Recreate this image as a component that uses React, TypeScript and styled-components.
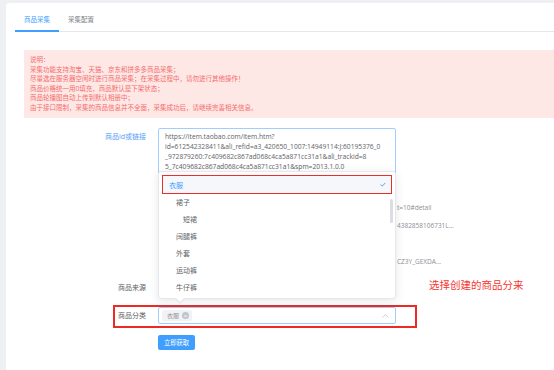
import React from 'react'
import styled, { createGlobalStyle } from 'styled-components'

const GlobalStyle = createGlobalStyle`
    html, body {
        margin: 0;
        padding: 0;
    }
    body {
        width: 554px;
        height: 370px;
        overflow: hidden;
        background: #eef0f3;
        font-family: "Open Sans", "Noto Sans CJK SC", sans-serif;
    }
`;

const Page = styled.div`
    width: 800px;
    padding: 3px 0 0 6px;
`;

const Card = styled.div`
    background: #fff;
    border-radius: 4px 0 0 0;
    padding: 7px 9px 0;
    min-height: 420px;
`;

const Tabs = styled.div`
    display: flex;
    border-bottom: 1px solid #e4e7ed;
`;

const Tab = styled.div<{ $active?: boolean }>`
    height: 20px;
    line-height: 20px;
    padding: 0 9px;
    margin-bottom: -1px;
    font-size: 6.5px;
    color: ${p => (p.$active ? '#409eff' : '#7a7d84')};
    border-bottom: 2px solid ${p => (p.$active ? '#409eff' : 'transparent')};
`;

const Content = styled.div`
    padding: 0 9px;
`;

const Alert = styled.div`
    margin-top: 18px;
    padding: 5px 6px 6px;
    background: #fde8e6;
    color: #f56c6c;
    font-size: 6.5px;
    line-height: 9.5px;
`;

const Form = styled.div`
    margin-top: 10px;
`;

const FormItem = styled.div`
    position: relative;
    display: flex;
    align-items: flex-start;
    margin-bottom: 11px;
`;

const Label = styled.div<{ $focus?: boolean }>`
    width: 122px;
    padding-right: 12px;
    text-align: right;
    font-size: 7px;
    line-height: 17px;
    color: ${p => (p.$focus ? '#5a9ef7' : '#606266')};
`;

const Field = styled.div`
    display: flex;
    flex-direction: column;
`;

const Textarea = styled.textarea`
    display: block;
    box-sizing: border-box;
    width: 238px;
    height: 52px;
    margin: 0;
    padding: 3px 6px;
    border: 1px solid #a0cfff;
    border-radius: 2px;
    font-family: inherit;
    font-size: 6.7px;
    line-height: 10px;
    color: #606266;
    resize: none;
    overflow: hidden;
    outline: none;
`;

/* example links under the textarea, mostly covered by the open dropdown */
const Hints = styled.div`
    margin: 19px 0 -3px 239px;
`;

const HintLine = styled.div`
    height: 18px;
    line-height: 18px;
    white-space: nowrap;
    font-size: 6.5px;
    color: #8c8f96;
`;

const SourceBox = styled.div`
    box-sizing: border-box;
    width: 238px;
    height: 17px;
    border: 1px solid #dcdfe6;
    border-radius: 2px;
`;

const SelectBox = styled.div`
    position: relative;
    box-sizing: border-box;
    display: flex;
    align-items: center;
    justify-content: space-between;
    width: 238px;
    height: 17px;
    padding: 0 6px 0 3px;
    border: 1px solid #a0cfff;
    border-radius: 2px;
    background: #fff;
`;

const Tag = styled.span`
    display: flex;
    align-items: center;
    gap: 3px;
    height: 11px;
    padding: 0 3px 0 5px;
    border-radius: 2px;
    background: #f0f2f5;
    color: #909399;
    font-size: 6px;
`;

const TagClose = styled.span`
    display: flex;
    align-items: center;
    justify-content: center;
    width: 7px;
    height: 7px;
    border-radius: 50%;
    background: #c0c4cc;
    color: #fff;
    font-size: 6px;
    line-height: 1;
`;

const Popup = styled.div`
    position: absolute;
    left: -1px;
    bottom: calc(100% + 9px);
    z-index: 10;
    box-sizing: border-box;
    width: 238px;
    height: 128px;
    padding: 4px 4px;
    background: #fff;
    border: 1px solid #e4e7ed;
    border-radius: 3px;
    box-shadow: 0 2px 10px rgba(0, 0, 0, 0.1);

    &::before,
    &::after {
        content: '';
        position: absolute;
        left: 16px;
        border: 5px solid transparent;
    }
    &::before {
        bottom: -11px;
        border-top-color: #e4e7ed;
    }
    &::after {
        bottom: -9px;
        border-top-color: #fff;
    }
`;

const Option = styled.div<{ $level: number; $selected?: boolean }>`
    display: flex;
    align-items: center;
    justify-content: space-between;
    height: 17px;
    padding: 0 5px 0 ${p => 6 + p.$level * 7}px;
    font-size: 7px;
    color: ${p => (p.$selected ? '#409eff' : '#606266')};
    background: ${p => (p.$selected ? '#f5f7fa' : 'transparent')};
    outline: ${p => (p.$selected ? '1.5px solid #e8302a' : 'none')};
`;

const Thumb = styled.div`
    position: absolute;
    right: 2px;
    top: 27px;
    width: 3px;
    height: 24px;
    border-radius: 2px;
    background: #dcdde0;
`;

const Marker = styled.div`
    position: absolute;
    left: 89px;
    top: -2px;
    box-sizing: border-box;
    width: 304px;
    height: 23px;
    border: 2px solid #ee2a24;
    pointer-events: none;
`;

const Note = styled.div`
    position: absolute;
    left: 405px;
    top: -29px;
    font-size: 10.5px;
    line-height: 14px;
    white-space: nowrap;
    color: #f5352f;
`;

const SubmitRow = styled.div`
    display: flex;
    padding-left: 134px;
`;

const Button = styled.button`
    width: 37px;
    height: 15px;
    padding: 0;
    border: none;
    border-radius: 2px;
    background: #409eff;
    color: #fff;
    font-family: inherit;
    font-size: 6.3px;
`;

const notes = [
    '说明：',
    '采集功能支持淘宝、天猫、京东和拼多多商品采集；',
    '尽量选在服务器空闲时进行商品采集；在采集过程中，请勿进行其他操作！',
    '商品价格统一用0填充，商品默认是下架状态；',
    '商品轮播图自动上传到默认相册中；',
    '由于接口限制，采集的商品信息并不全面，采集成功后，请继续完善相关信息。',
];

const url = [
    'https://item.taobao.com/item.htm?',
    'id=612542328411&ali_refid=a3_420650_1007:14949114:J:60195376_0',
    '_972879260:7c409682c867ad068c4ca5a871cc31a1&ali_trackid=8',
    '5_7c409682c867ad068c4ca5a871cc31a1&spm=2013.1.0.0',
].join('\n');

const hints = ['t=10#detail', '4382858106731L...', '', 'CZ3Y_GEXDA...'];

const options = [
    { name: '衣服', level: 0, selected: true },
    { name: '裙子', level: 1 },
    { name: '短裙', level: 2 },
    { name: '阔腿裤', level: 1 },
    { name: '外套', level: 1 },
    { name: '运动裤', level: 1 },
    { name: '牛仔裤', level: 1 },
];

const Check = () => (
    <svg width="6" height="5" viewBox="0 0 6 5">
        <polyline points="0.6,2.6 2.3,4.1 5.4,0.8" fill="none" stroke="#409eff" strokeWidth="0.9" />
    </svg>
);

const ChevronUp = () => (
    <svg width="7" height="4" viewBox="0 0 7 4">
        <polyline points="0.5,3.5 3.5,0.6 6.5,3.5" fill="none" stroke="#c0c4cc" strokeWidth="0.8" />
    </svg>
);

const App = () => {
    return (
        <Page>
            <GlobalStyle />
            <Card>
                <Tabs>
                    <Tab $active>商品采集</Tab>
                    <Tab>采集配置</Tab>
                </Tabs>

                <Content>
                    <Alert>
                        {notes.map(n => (
                            <div key={n}>{n}</div>
                        ))}
                    </Alert>

                    <Form>
                        <FormItem>
                            <Label $focus>商品id或链接</Label>
                            <Field>
                                <Textarea readOnly wrap="off" spellCheck={false} value={url} />
                                <Hints>
                                    {hints.map((h, i) => (
                                        <HintLine key={i}>{h}</HintLine>
                                    ))}
                                </Hints>
                            </Field>
                        </FormItem>

                        <FormItem>
                            <Label>商品来源</Label>
                            <SourceBox />
                        </FormItem>

                        <FormItem>
                            <Label>商品分类</Label>
                            <SelectBox>
                                <Tag>
                                    衣服
                                    <TagClose>×</TagClose>
                                </Tag>
                                <ChevronUp />
                                <Popup>
                                    {options.map(o => (
                                        <Option key={o.name} $level={o.level} $selected={o.selected}>
                                            <span>{o.name}</span>
                                            {o.selected && <Check />}
                                        </Option>
                                    ))}
                                    <Thumb />
                                </Popup>
                            </SelectBox>
                            <Marker />
                            <Note>选择创建的商品分来</Note>
                        </FormItem>

                        <SubmitRow>
                            <Button>立即获取</Button>
                        </SubmitRow>
                    </Form>
                </Content>
            </Card>
        </Page>
    )
}

export default App
